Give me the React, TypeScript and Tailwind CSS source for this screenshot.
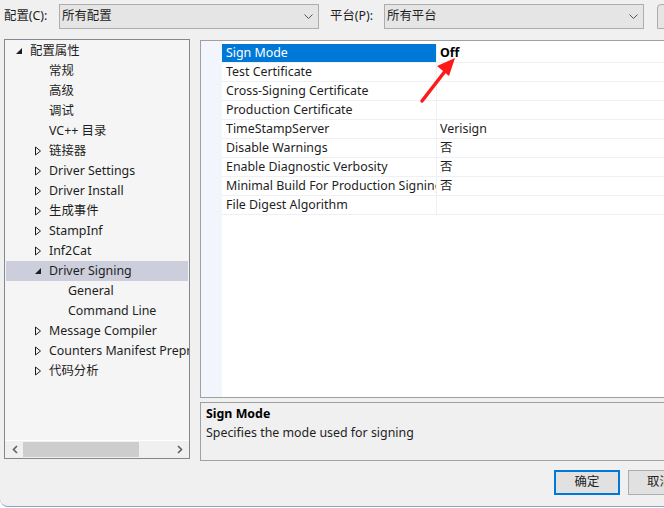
import React from "react";

const font = {
  fontFamily: '"Noto Sans", "Noto Sans CJK SC", sans-serif',
};

type TreeItem = { label: string; level: 0 | 1 | 2; arrow?: "open" | "closed"; selected?: boolean };

const tree: TreeItem[] = [
  { label: "配置属性", level: 0, arrow: "open" },
  { label: "常规", level: 1 },
  { label: "高级", level: 1 },
  { label: "调试", level: 1 },
  { label: "VC++ 目录", level: 1 },
  { label: "链接器", level: 1, arrow: "closed" },
  { label: "Driver Settings", level: 1, arrow: "closed" },
  { label: "Driver Install", level: 1, arrow: "closed" },
  { label: "生成事件", level: 1, arrow: "closed" },
  { label: "StampInf", level: 1, arrow: "closed" },
  { label: "Inf2Cat", level: 1, arrow: "closed" },
  { label: "Driver Signing", level: 1, arrow: "open", selected: true },
  { label: "General", level: 2 },
  { label: "Command Line", level: 2 },
  { label: "Message Compiler", level: 1, arrow: "closed" },
  { label: "Counters Manifest Preprocessor", level: 1, arrow: "closed" },
  { label: "代码分析", level: 1, arrow: "closed" },
];

const props: { name: string; value: string }[] = [
  { name: "Sign Mode", value: "Off" },
  { name: "Test Certificate", value: "" },
  { name: "Cross-Signing Certificate", value: "" },
  { name: "Production Certificate", value: "" },
  { name: "TimeStampServer", value: "Verisign" },
  { name: "Disable Warnings", value: "否" },
  { name: "Enable Diagnostic Verbosity", value: "否" },
  { name: "Minimal Build For Production Signing", value: "否" },
  { name: "File Digest Algorithm", value: "" },
];

function Arrow({ kind }: { kind: "open" | "closed" }) {
  if (kind === "open")
    return (
      <svg width="8" height="8" viewBox="0 0 8 8">
        <path d="M7 1 L7 7 L1 7 Z" fill="#1e1e1e" />
      </svg>
    );
  return (
    <svg width="8" height="10" viewBox="0 0 8 10">
      <path d="M1.5 1 L6.5 5 L1.5 9 Z" fill="none" stroke="#1e1e1e" strokeWidth="1" />
    </svg>
  );
}

function Combo({ text }: { text: string }) {
  return (
    <div className="w-[260px] shrink-0 h-[25px] border border-[#adadad] bg-[#e5e5e5] flex items-center justify-between pl-[2px] pr-[5px] text-[#1e1e1e]">
      <span>{text}</span>
      <svg width="9" height="6" viewBox="0 0 9 6">
        <path d="M0.5 0.5 L4.5 4.5 L8.5 0.5" fill="none" stroke="#555" strokeWidth="1" />
      </svg>
    </div>
  );
}

export default function App() {
  return (
    <div className="w-[664px] h-[508px] bg-white overflow-hidden text-[12.4px] text-[#1e1e1e]" style={font}>
      <div className="relative w-[670px] h-[507px] bg-[#f0f0f0] rounded-bl-[8px] border-b border-[#8ba3bd] flex flex-col">
        {/* top selectors */}
        <div className="flex items-center h-[31px] pt-[2px] pl-[4px]">
          <span className="w-[55px] shrink-0">配置(C):</span>
          <Combo text="所有配置" />
          <span className="ml-[11px] w-[54px] shrink-0">平台(P):</span>
          <Combo text="所有平台" />
          <div className="ml-[13px] w-[30px] shrink-0 h-[25px] border border-[#adadad] bg-[#e5e5e5] rounded-tl-[4px]" />
        </div>

        <div className="flex mt-[8px] pl-[4px]">
          {/* tree */}
          <div className="w-[186px] shrink-0 h-[420px] border border-[#828790] bg-[#f5f5f5] flex flex-col overflow-hidden">
            <div className="flex-1 pt-[1px] overflow-hidden">
              {tree.map((t) => (
                <div
                  key={t.label}
                  className={`h-[20px] flex items-center whitespace-nowrap mx-[1px] ${t.selected ? "bg-[#cccedb]" : ""}`}
                >
                  <div
                    className={`shrink-0 flex items-center justify-center w-[10px] ${
                      t.level === 0 ? "ml-[8px]" : "ml-[27px]"
                    }`}
                  >
                    {t.arrow ? <Arrow kind={t.arrow} /> : null}
                  </div>
                  <span className={t.level === 2 ? "ml-[25px]" : "ml-[6px]"}>{t.label}</span>
                </div>
              ))}
            </div>
            <div className="h-[18px] border-t border-white bg-[#f0f0f0] flex items-center px-[1px]">
              <div className="w-[17px] flex justify-center">
                <svg width="6" height="9" viewBox="0 0 6 9">
                  <path d="M5 1 L1.5 4.5 L5 8" fill="none" stroke="#606060" strokeWidth="1.6" />
                </svg>
              </div>
              <div className="w-[116px] h-[15px] bg-[#cdcdcd]" />
              <div className="flex-1" />
              <div className="w-[17px] flex justify-center">
                <svg width="6" height="9" viewBox="0 0 6 9">
                  <path d="M1 1 L4.5 4.5 L1 8" fill="none" stroke="#606060" strokeWidth="1.6" />
                </svg>
              </div>
            </div>
          </div>

          {/* right side */}
          <div className="ml-[10px] flex flex-col">
            <div className="w-[470px] h-[358px] border border-[#a0a0a0] bg-white mt-[1px] flex">
              <div className="w-[21px] bg-[#f2f5fb]" />
              <div className="flex-1 pt-[3px]">
                {props.map((p, i) => (
                  <div key={p.name} className="h-[19px] flex border-b border-[#eef0f6] whitespace-nowrap">
                    <div
                      className={`w-[214px] shrink-0 overflow-hidden pl-[4px] flex items-center ${
                        i === 0 ? "bg-[#0078d7] text-white" : ""
                      }`}
                    >
                      {p.name}
                    </div>
                    <div className="w-px bg-[#eef0f6]" />
                    <div className={`pl-[3px] flex items-center ${i === 0 ? "font-bold text-black" : ""}`}>
                      {p.value}
                    </div>
                  </div>
                ))}
              </div>
            </div>
            <div className="mt-[4px] w-[470px] h-[59px] border border-[#a0a0a0] px-[5px] pt-[1px] leading-[19px]">
              <div className="font-bold text-black">Sign Mode</div>
              <div>Specifies the mode used for signing</div>
            </div>
          </div>
        </div>

        {/* buttons */}
        <div className="flex justify-end mt-[9px] pr-[2px]">
          <div className="w-[66px] h-[25px] border-2 border-[#0078d7] bg-[#e1e1e1] flex items-center justify-center">
            确定
          </div>
          <div className="ml-[8px] w-[40px] h-[25px] border border-[#adadad] bg-[#e1e1e1] flex items-center pl-[18px] overflow-hidden whitespace-nowrap">
            取消
          </div>
        </div>

        {/* red annotation arrow */}
        <svg className="absolute left-[410px] top-[50px]" width="60" height="60" viewBox="0 0 60 60">
          <line x1="12" y1="51" x2="36" y2="20" stroke="#ff1a1a" strokeWidth="3.5" strokeLinecap="round" />
          <path d="M45 8 L27 16 L39 26 Z" fill="#ff1a1a" />
        </svg>
      </div>
    </div>
  );
}
